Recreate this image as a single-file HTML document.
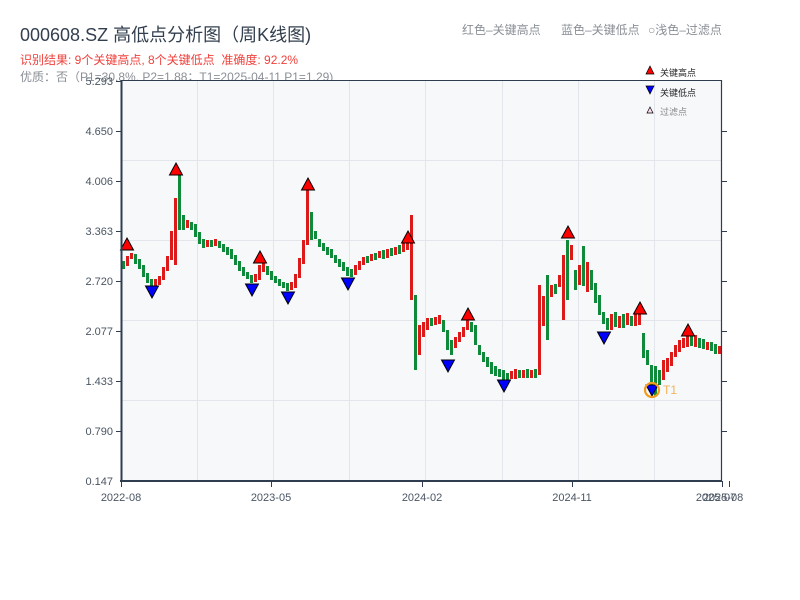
<!DOCTYPE html>
<html><head><meta charset="utf-8"><style>
html,body{margin:0;padding:0;background:#fff;width:800px;height:600px;overflow:hidden}
body{font-family:"Liberation Sans","Noto Sans CJK SC",sans-serif;position:relative}
.t{position:absolute;white-space:nowrap}
</style></head><body>
<div class="t" style="left:20px;top:21px;font-size:18px;color:#333f4e">000608.SZ 高低点分析图（周K线图)</div>
<div class="t" style="left:20px;top:51px;font-size:12px;color:#f0413c">识别结果: 9个关键高点, 8个关键低点&nbsp;&nbsp;准确度: 92.2%</div>
<div class="t" style="left:20px;top:68px;font-size:12px;color:#8a8f96">优质：否（P1=30.8%, P2=1.88；T1=2025-04-11 P1=1.29)</div>
<div class="t" style="left:462px;top:21px;font-size:12px;color:#8a8f96">红色–关键高点</div>
<div class="t" style="left:561px;top:21px;font-size:12px;color:#8a8f96">蓝色–关键低点</div>
<div class="t" style="left:648px;top:21px;font-size:12px;color:#8a8f96">○浅色–过滤点</div>
<svg width="800" height="600" style="position:absolute;left:0;top:0" xmlns="http://www.w3.org/2000/svg">
<rect x="121" y="81" width="600" height="400" fill="#f7f8fa"/>
<g stroke="#e2e5ea" stroke-width="1">
<line x1="121" y1="160.5" x2="721" y2="160.5"/><line x1="121" y1="240.5" x2="721" y2="240.5"/><line x1="121" y1="320.5" x2="721" y2="320.5"/><line x1="121" y1="400.5" x2="721" y2="400.5"/>
<line x1="197.5" y1="81" x2="197.5" y2="481"/><line x1="273.5" y1="81" x2="273.5" y2="481"/><line x1="349.5" y1="81" x2="349.5" y2="481"/><line x1="425.5" y1="81" x2="425.5" y2="481"/><line x1="502.5" y1="81" x2="502.5" y2="481"/><line x1="578.5" y1="81" x2="578.5" y2="481"/><line x1="654.5" y1="81" x2="654.5" y2="481"/>
</g>
<path fill="#0e8a3a" d="M122 261h3v8h-3zM134 254h3v10h-3zM138 259h3v10h-3zM142 265h3v12h-3zM146 273h3v10h-3zM150 279h3v7h-3zM178 175h3v55h-3zM182 215h3v15h-3zM190 222h3v8h-3zM194 224h3v13h-3zM198 232h3v12h-3zM202 239h3v9h-3zM210 240h3v7h-3zM218 241h3v7h-3zM222 244h3v8h-3zM226 247h3v8h-3zM230 249h3v10h-3zM234 255h3v10h-3zM238 261h3v10h-3zM242 267h3v9h-3zM246 272h3v7h-3zM250 275h3v8h-3zM266 266h3v9h-3zM270 271h3v9h-3zM274 276h3v7h-3zM278 279h3v7h-3zM282 282h3v6h-3zM286 283h3v8h-3zM310 212h3v28h-3zM314 231h3v8h-3zM318 239h3v8h-3zM322 243h3v8h-3zM326 247h3v8h-3zM330 249h3v9h-3zM334 255h3v8h-3zM338 259h3v8h-3zM342 262h3v9h-3zM346 267h3v9h-3zM350 269h3v8h-3zM366 256h3v7h-3zM374 253h3v7h-3zM382 250h3v9h-3zM390 248h3v8h-3zM398 245h3v9h-3zM414 295h3v75h-3zM430 318h3v8h-3zM442 320h3v12h-3zM446 330h3v20h-3zM450 340h3v15h-3zM470 322h3v10h-3zM474 325h3v20h-3zM478 345h3v10h-3zM482 352h3v10h-3zM486 357h3v10h-3zM490 362h3v12h-3zM494 366h3v10h-3zM498 369h3v8h-3zM502 370h3v10h-3zM506 373h3v9h-3zM518 370h3v8h-3zM526 369h3v9h-3zM534 369h3v9h-3zM546 275h3v65h-3zM554 284h3v10h-3zM566 240h3v60h-3zM574 270h3v20h-3zM582 246h3v40h-3zM590 270h3v20h-3zM594 283h3v20h-3zM598 295h3v20h-3zM602 312h3v12h-3zM606 318h3v12h-3zM614 312h3v15h-3zM622 314h3v14h-3zM630 316h3v10h-3zM642 333h3v25h-3zM646 350h3v15h-3zM650 365h3v20h-3zM654 366h3v30h-3zM658 370h3v15h-3zM690 336h3v10h-3zM698 338h3v10h-3zM702 339h3v10h-3zM710 342h3v9h-3zM714 344h3v10h-3z"/>
<path fill="#dd1a1a" d="M126 256h3v10h-3zM130 253h3v6h-3zM154 279h3v7h-3zM158 276h3v9h-3zM162 267h3v13h-3zM166 256h3v15h-3zM170 231h3v29h-3zM174 198h3v67h-3zM186 220h3v8h-3zM206 240h3v7h-3zM214 239h3v7h-3zM254 274h3v8h-3zM258 265h3v15h-3zM262 262h3v10h-3zM290 282h3v8h-3zM294 274h3v14h-3zM298 258h3v20h-3zM302 240h3v24h-3zM306 190h3v55h-3zM354 265h3v10h-3zM358 261h3v9h-3zM362 257h3v8h-3zM370 254h3v7h-3zM378 251h3v7h-3zM386 249h3v9h-3zM394 247h3v8h-3zM402 243h3v9h-3zM406 240h3v10h-3zM410 215h3v85h-3zM418 325h3v30h-3zM422 322h3v15h-3zM426 318h3v12h-3zM434 317h3v8h-3zM438 315h3v9h-3zM454 337h3v11h-3zM458 332h3v10h-3zM462 327h3v10h-3zM466 318h3v12h-3zM510 371h3v8h-3zM514 369h3v10h-3zM522 370h3v8h-3zM530 370h3v8h-3zM538 285h3v90h-3zM542 296h3v30h-3zM550 285h3v12h-3zM558 275h3v12h-3zM562 255h3v65h-3zM570 245h3v15h-3zM578 265h3v20h-3zM586 262h3v30h-3zM610 314h3v16h-3zM618 316h3v12h-3zM626 313h3v12h-3zM634 314h3v12h-3zM638 305h3v20h-3zM662 360h3v20h-3zM666 358h3v14h-3zM670 352h3v14h-3zM674 345h3v12h-3zM678 340h3v12h-3zM682 338h3v10h-3zM686 335h3v12h-3zM694 335h3v12h-3zM706 342h3v8h-3zM718 346h3v8h-3z"/>
<g stroke="#000" stroke-width="1">
<polygon points="127,238 133.5,250 120.5,250" fill="#f00"/>
<polygon points="176,163 182.5,175 169.5,175" fill="#f00"/>
<polygon points="260,251 266.5,263 253.5,263" fill="#f00"/>
<polygon points="308,178 314.5,190 301.5,190" fill="#f00"/>
<polygon points="408,231 414.5,243 401.5,243" fill="#f00"/>
<polygon points="468,308 474.5,320 461.5,320" fill="#f00"/>
<polygon points="568,226 574.5,238 561.5,238" fill="#f00"/>
<polygon points="640,302 646.5,314 633.5,314" fill="#f00"/>
<polygon points="688,324 694.5,336 681.5,336" fill="#f00"/>
<polygon points="145.5,286 158.5,286 152,298" fill="#00f"/>
<polygon points="245.5,284 258.5,284 252,296" fill="#00f"/>
<polygon points="281.5,292 294.5,292 288,304" fill="#00f"/>
<polygon points="341.5,278 354.5,278 348,290" fill="#00f"/>
<polygon points="441.5,360 454.5,360 448,372" fill="#00f"/>
<polygon points="497.5,380 510.5,380 504,392" fill="#00f"/>
<polygon points="597.5,332 610.5,332 604,344" fill="#00f"/>
<polygon points="646,385 658,385 652,396" fill="#00f"/>
</g>
<g stroke="#2e3e50" fill="none">
<line x1="121" y1="80.5" x2="721" y2="80.5" stroke-width="1"/>
<line x1="121.5" y1="80" x2="121.5" y2="482" stroke-width="2"/>
<line x1="120" y1="481" x2="722" y2="481" stroke-width="2"/>
<line x1="721.5" y1="80" x2="721.5" y2="482" stroke-width="1.2"/>
</g>
<g stroke="#2e3e50" stroke-width="1">
<line x1="116" y1="81.5" x2="121" y2="81.5"/><line x1="116" y1="131.5" x2="121" y2="131.5"/><line x1="116" y1="181.5" x2="121" y2="181.5"/><line x1="116" y1="231.5" x2="121" y2="231.5"/><line x1="116" y1="281.5" x2="121" y2="281.5"/><line x1="116" y1="331.5" x2="121" y2="331.5"/><line x1="116" y1="381.5" x2="121" y2="381.5"/><line x1="116" y1="431.5" x2="121" y2="431.5"/>
<line x1="721" y1="131.5" x2="727" y2="131.5"/><line x1="721" y1="181.5" x2="727" y2="181.5"/><line x1="721" y1="231.5" x2="727" y2="231.5"/><line x1="721" y1="281.5" x2="727" y2="281.5"/><line x1="721" y1="331.5" x2="727" y2="331.5"/><line x1="721" y1="381.5" x2="727" y2="381.5"/><line x1="721" y1="431.5" x2="727" y2="431.5"/>
<line x1="121.5" y1="481" x2="121.5" y2="487"/><line x1="271.5" y1="481" x2="271.5" y2="487"/><line x1="422.5" y1="481" x2="422.5" y2="487"/><line x1="572.5" y1="481" x2="572.5" y2="487"/><line x1="722.5" y1="481" x2="722.5" y2="487"/><line x1="729.5" y1="481" x2="729.5" y2="487"/>
</g>
<g font-size="11" fill="#4a5563" text-anchor="end" font-family="Liberation Sans,sans-serif">
<text x="113" y="85">5.293</text><text x="113" y="135">4.650</text><text x="113" y="185">4.006</text><text x="113" y="235">3.363</text><text x="113" y="285">2.720</text><text x="113" y="335">2.077</text><text x="113" y="385">1.433</text><text x="113" y="435">0.790</text><text x="113" y="485">0.147</text>
</g>
<g font-size="11" fill="#4a5563" text-anchor="middle" font-family="Liberation Sans,sans-serif">
<text x="121" y="501">2022-08</text><text x="271" y="501">2023-05</text><text x="422" y="501">2024-02</text><text x="572" y="501">2024-11</text><text x="716" y="501">2025-07</text><text x="723" y="501">2025-08</text>
</g>
<circle cx="652" cy="390" r="7" fill="none" stroke="#f29a1f" stroke-width="2.2"/>
<text x="663" y="394" font-size="12" fill="#f3b35a">T1</text>
<g font-size="9" font-family="Liberation Sans,Noto Sans CJK SC,sans-serif">
<polygon points="650,66 654,74 646,74" fill="#f00" stroke="#000" stroke-width=".7"/><text x="660" y="76" fill="#222">关键高点</text>
<polygon points="646,86 654,86 650,94" fill="#00f" stroke="#000" stroke-width=".7"/><text x="660" y="96" fill="#222">关键低点</text>
<polygon points="650,107 653,113 647,113" fill="#fde" stroke="#000" stroke-width=".7"/><text x="660" y="115" fill="#888">过滤点</text>
</g>
</svg>
</body></html>
